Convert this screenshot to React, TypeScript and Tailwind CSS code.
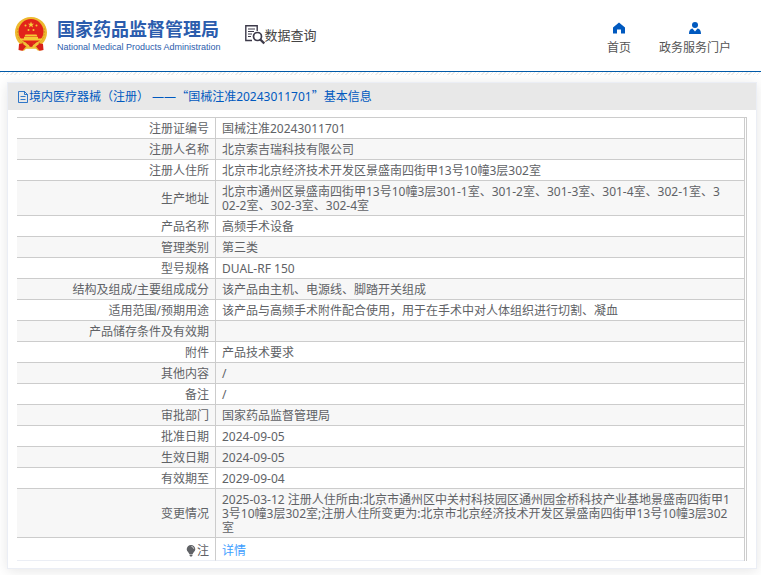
import type { ReactNode } from 'react';

interface Row {
  label: string;
  value: string;
}

const rows: Row[] = [
  { label: '注册证编号', value: '国械注准20243011701' },
  { label: '注册人名称', value: '北京索吉瑞科技有限公司' },
  { label: '注册人住所', value: '北京市北京经济技术开发区景盛南四街甲13号10幢3层302室' },
  {
    label: '生产地址',
    value:
      '北京市通州区景盛南四街甲13号10幢3层301-1室、301-2室、301-3室、301-4室、302-1室、3\n02-2室、302-3室、302-4室',
  },
  { label: '产品名称', value: '高频手术设备' },
  { label: '管理类别', value: '第三类' },
  { label: '型号规格', value: 'DUAL-RF 150' },
  { label: '结构及组成/主要组成成分', value: '该产品由主机、电源线、脚踏开关组成' },
  { label: '适用范围/预期用途', value: '该产品与高频手术附件配合使用，用于在手术中对人体组织进行切割、凝血' },
  { label: '产品储存条件及有效期', value: '' },
  { label: '附件', value: '产品技术要求' },
  { label: '其他内容', value: '/' },
  { label: '备注', value: '/' },
  { label: '审批部门', value: '国家药品监督管理局' },
  { label: '批准日期', value: '2024-09-05' },
  { label: '生效日期', value: '2024-09-05' },
  { label: '有效期至', value: '2029-09-04' },
  {
    label: '变更情况',
    value:
      '2025-03-12 注册人住所由:北京市通州区中关村科技园区通州园金桥科技产业基地景盛南四街甲1\n3号10幢3层302室;注册人住所变更为:北京市北京经济技术开发区景盛南四街甲13号10幢3层302\n室',
  },
];

// National emblem, simplified
function Emblem() {
  return (
    <svg viewBox="0 0 32 34" className="h-[34px] w-8 shrink-0" aria-hidden="true">
      <path d="M16 0C7 0 0 7 0 15.500c0 4.500 1.800 8.500 4.800 11.500L4 33l5 .8 2-2h10l2 2 5-.8-.8-6c3-3 4.800-7 4.800-11.500C32 7 25 0 16 0z" fill="#edb92f" />
      <path d="M3 11C1.500 17 4 23 8 26M29 11c1.500 6-1 12-5 15" fill="none" stroke="#d99a20" strokeWidth="1" strokeDasharray="2 1" />
      <circle cx="16" cy="14.500" r="12.500" fill="#e2231a" />
      <path d="M16 4.500l.8 2.200h2.300l-1.800 1.400.7 2.300-2-1.400-2 1.400.7-2.300-1.800-1.400h2.300z" fill="#f7d33c" />
      <g fill="#f5c935">
        <circle cx="10.500" cy="8.500" r="1" />
        <circle cx="21.500" cy="8.500" r="1" />
        <circle cx="13.500" cy="13" r="1" />
        <circle cx="18.500" cy="13" r="1" />
        <path d="M10.500 17.500h11l1 2h-13zM9 20h14v1.500h4v2H5v-2h4z" />
      </g>
      <path d="M4 27c4-.5 6-1.500 8-1.500l4 2.500 4-2.500c2 0 4 1 8 1.500l.5 6-4 .8-3.500-4.300h-10L7.500 33.800 3.500 33z" fill="#d8201a" />
      <path d="M9 25c2 0 4 3.500 7 3.500s5-3.500 7-3.500l1 2-5 4h-6l-5-4z" fill="#f0c238" />
      <circle cx="16" cy="28" r="2" fill="#d8201a" />
    </svg>
  );
}

function SearchDocIcon() {
  return (
    <svg viewBox="0 0 20 20" className="h-5 w-5 shrink-0" fill="none" stroke="#3d3a4a" aria-hidden="true">
      <path d="M7 15.500H.800V.800h11.400V6" strokeWidth="1.400" />
      <path d="M3 4h7M3 6.500h6M3 9h4M3 11.500h3" strokeWidth="1" />
      <circle cx="12.500" cy="11.500" r="4" strokeWidth="1.700" fill="#fff" />
      <path d="M15.300 14.500l4 4" strokeWidth="2.400" />
    </svg>
  );
}

function HomeIcon() {
  return (
    <svg viewBox="0 0 12 12" className="h-3 w-3" fill="#0059bf" aria-hidden="true">
      <path d="M6 .5L0 5.500V11.500H4V7.500h4v4h4V5.500z" />
    </svg>
  );
}

function UserIcon() {
  return (
    <svg viewBox="0 0 12 12" className="h-3 w-3" fill="#0059bf" aria-hidden="true">
      <circle cx="6" cy="3" r="3" />
      <path d="M3.500 6.500L6 9.500l2.500-3C11 7 12 8.500 12 12H0c0-3.500 1-5 3.500-5.500z" />
    </svg>
  );
}

function FileIcon() {
  return (
    <svg viewBox="0 0 11 12" className="h-3 w-[11px] shrink-0" fill="none" stroke="#0059bf" aria-hidden="true">
      <path d="M.5 .5h6l3 3v8h-9zM6.500 .5v3h3M2.500 5.500h5M2.500 8.500h5" strokeWidth=".8" />
    </svg>
  );
}

function BulbIcon() {
  return (
    <svg viewBox="0 0 10 12" className="h-3 w-[10px]" fill="#606266" aria-hidden="true">
      <path d="M5 0a4.300 4.300 0 0 1 4.300 4.300C9.300 6.500 7 7.500 6.700 9H3.300C3 7.500.7 6.500.7 4.300A4.300 4.300 0 0 1 5 0zM3.500 9.600h3v1L5.700 11.500H4.300l-.8-.9z" />
      <path d="M5.500 1.500c1.300.2 2 1 2.200 2.200" fill="none" stroke="#fff" strokeWidth=".8" />
    </svg>
  );
}

function NavLink({ icon, text }: { icon: ReactNode; text: string }) {
  return (
    <a href="#" className="flex flex-col items-center gap-1 leading-5 text-[#555]">
      {icon}
      {text}
    </a>
  );
}

export default function App() {
  return (
    <div
      lang="zh-CN"
      className="bg-white pb-[6px] font-['Noto_Sans','Noto_Sans_CJK_SC',sans-serif] text-xs text-[#606266]"
    >
      <header className="flex h-[72px] items-start justify-between border-b border-[#0059a8] pr-[30px] pl-[15px]">
        <div className="flex items-start">
          <a href="#" className="flex gap-[10px] pt-[17px] text-[#2b5cad]">
            <Emblem />
            <span className="flex flex-col">
              <span className="text-[18px] leading-6 font-bold whitespace-nowrap">国家药品监督管理局</span>
              <span className="font-['Liberation_Sans',sans-serif] text-[9px] leading-3 whitespace-nowrap">
                National Medical Products Administration
              </span>
            </span>
          </a>
          <a href="#" className="ml-6 flex items-end pt-[25px] text-[#444]">
            <SearchDocIcon />
            <span className="self-start text-[13px] leading-5">数据查询</span>
          </a>
        </div>
        <nav className="flex gap-7 pt-[22px]">
          <NavLink icon={<HomeIcon />} text="首页" />
          <NavLink icon={<UserIcon />} text="政务服务门户" />
        </nav>
      </header>
      <div className="h-[3px] bg-[repeating-linear-gradient(135deg,#ececea_0_1px,#fff_1px_3px)]" />

      <main className="mx-1 mt-[7px] ml-[7px] border border-[#ebeef5] bg-white shadow-[0_2px_12px_0_rgba(0,0,0,0.1)]">
        <h1 className="flex h-[27px] items-center bg-[#e8e8e8] pl-[10px] leading-[14px] text-[#0059bf]">
          <FileIcon />
          <span>
            境内医疗器械（注册） ——<span className="font-['Noto_Sans_CJK_SC',sans-serif]">“</span>
            国械注准20243011701<span className="font-['Noto_Sans_CJK_SC',sans-serif]">”</span>基本信息
          </span>
        </h1>

        <div className="mt-[7px] mr-[9px] mb-[7px] ml-[9px] border-t border-r border-[#ccc] pr-px">
          <table className="w-full table-fixed border-separate border-spacing-0 border-r border-[#ccc] leading-[14px]">
            <colgroup>
              <col className="w-[199px]" />
              <col />
            </colgroup>
            <tbody>
              {rows.map((row) => (
                <tr key={row.label} className="even:bg-[#f7f7f7]">
                  <th scope="row" className="border-r border-b border-[#ccc] px-[6px] pt-1 pb-[2px] text-right font-normal">
                    {row.label}
                  </th>
                  <td className="border-b border-[#ccc] px-[6px] pt-1 pb-[2px] break-all whitespace-pre-line">
                    {row.value}
                  </td>
                </tr>
              ))}
              <tr>
                <th scope="row" className="border-r border-b border-r-[#ccc] border-b-[#ebeef5] px-[6px] pt-[6px] pb-[2px] text-right font-normal">
                  <span className="flex items-center justify-end gap-px">
                    <BulbIcon />注
                  </span>
                </th>
                <td className="border-b border-[#ebeef5] px-[6px] pt-[6px] pb-[2px]">
                  <a href="#" className="text-[#409eff]">详情</a>
                </td>
              </tr>
            </tbody>
          </table>
        </div>
      </main>
    </div>
  );
}
